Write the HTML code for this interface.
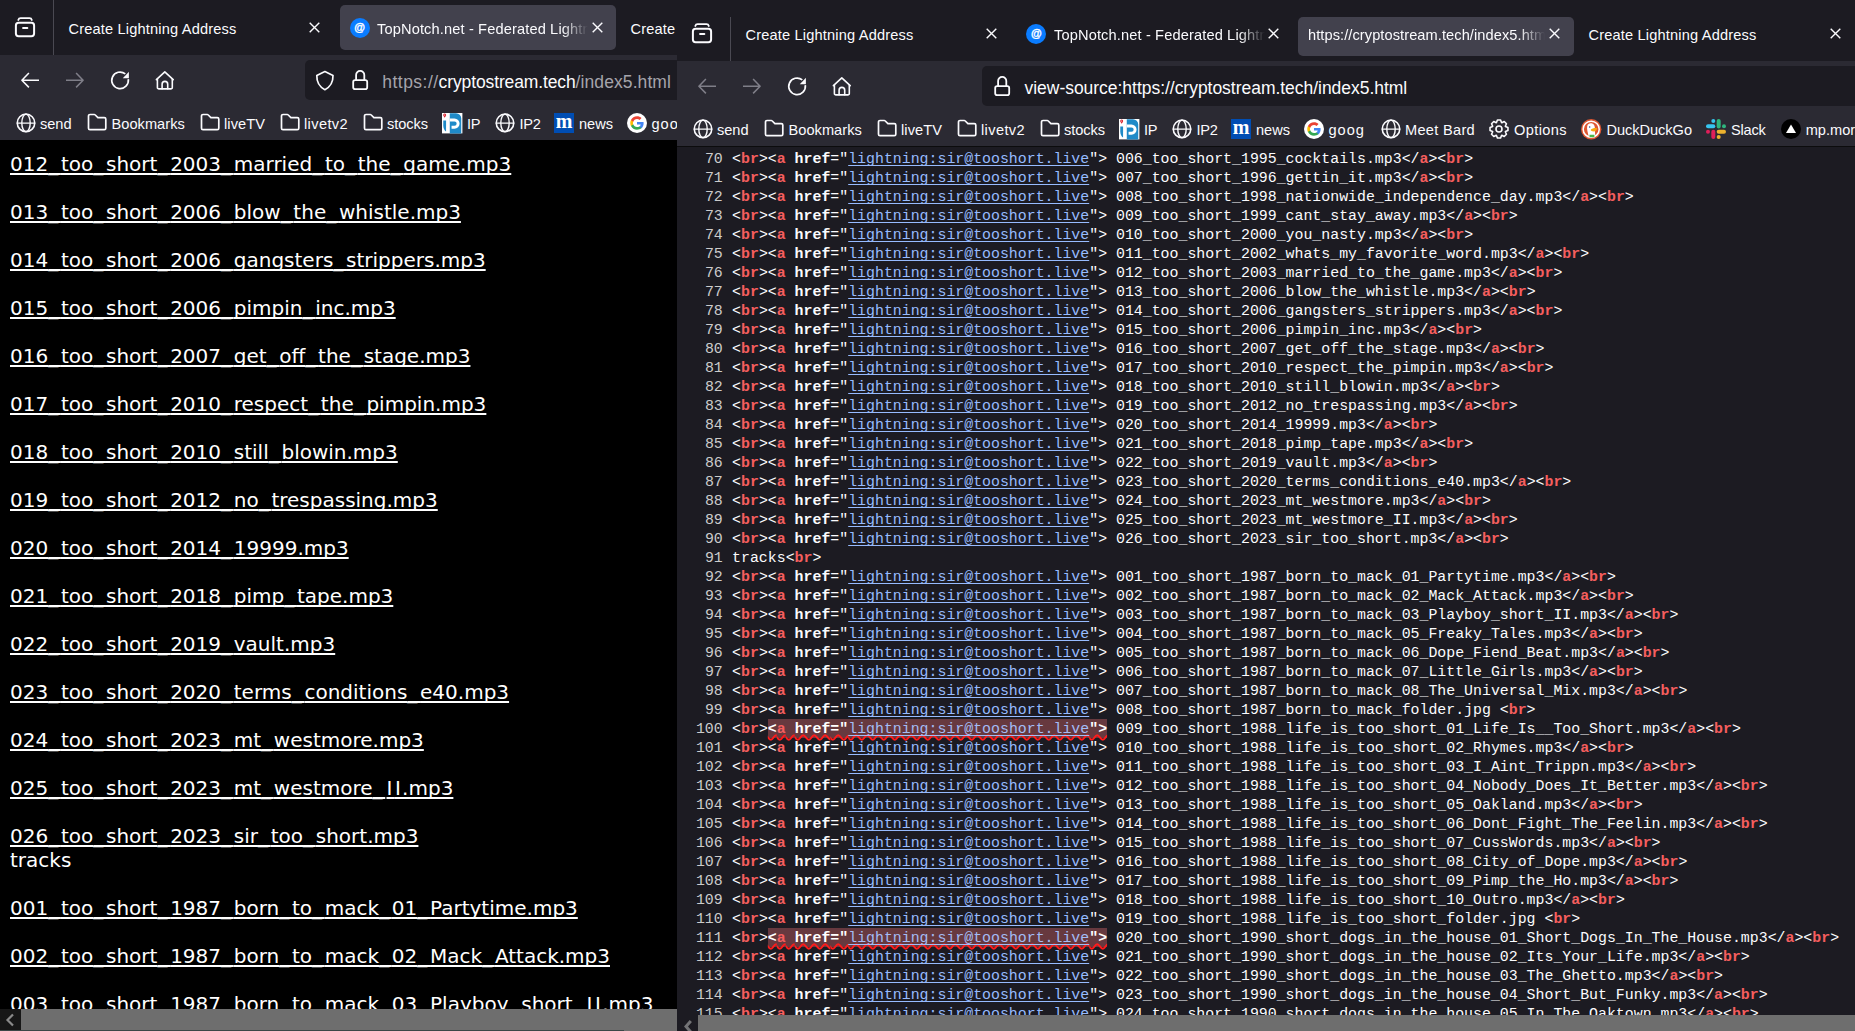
<!DOCTYPE html>
<html lang="en"><head><meta charset="utf-8"><title>cryptostream</title>
<style>
html,body{margin:0;padding:0}
body{width:1855px;height:1031px;overflow:hidden;background:#1c1b22;position:relative;font-family:"Liberation Sans",sans-serif}
.w{position:absolute;top:0;height:1031px;overflow:hidden}
.abs{position:absolute}
.t{position:absolute;white-space:pre;line-height:20px;height:20px;font-family:"Liberation Sans",sans-serif}
.fade{overflow:hidden;-webkit-mask-image:linear-gradient(to right,#000 calc(100% - 26px),transparent 100%);mask-image:linear-gradient(to right,#000 calc(100% - 26px),transparent 100%)}
#page{position:absolute;left:0;top:140px;width:677px;height:869px;background:#000;overflow:hidden}
#pg{position:absolute;left:10px;top:-12.5px;font:20px/24px "DejaVu Sans","Liberation Sans",sans-serif;color:#fff;white-space:nowrap}
#pg a{color:#fff;text-decoration:underline;text-decoration-thickness:1.5px;text-underline-offset:1.6px;text-decoration-skip-ink:none}
#pg i{font-style:normal;letter-spacing:2.72px}
#pg em{font-style:normal;letter-spacing:2.5px;margin-left:1.2px;margin-right:-1.2px}
#src{position:absolute;left:0;top:146px;width:1178px;height:869px;background:#1c1b22;overflow:hidden;border-top:1px solid #0c0c0d;box-sizing:border-box}
#vs{position:absolute;left:10px;top:3.0px;font:14.89px/19px "Liberation Mono",monospace;color:#fbfbfe}
#vs div{height:19px;padding-left:45.1px;white-space:pre}
#vs b.n{display:inline-block;width:44.67px;margin-left:-45.1px;margin-right:.43px;text-align:right;color:#ccc;font-weight:normal}
#vs b{color:#f55e5e}
#vs u{color:#97bbff;text-decoration-thickness:1px;text-underline-offset:2px;text-decoration-skip-ink:none}
#vs em{font-style:normal;font-weight:bold}
#vs s{text-decoration:underline wavy #ff1a1a 1.5px;text-underline-offset:1.2px;box-shadow:0 -1px 0 #67393f;background:#67393f;font-weight:bold;color:#fff;display:inline-block;height:18px;text-decoration-skip-ink:none}
#vs s u{color:#a4bcf5;font-weight:normal}
</style></head><body>
<div class="w" style="left:0;width:677px"><div class="abs" style="left:0;top:0;width:677px;height:55px;background:#1c1b22"></div><div class="abs" style="left:0;top:55px;width:677px;height:85px;background:#2b2a33"></div><svg style="position:absolute;left:13px;top:15px;overflow:visible" width="24" height="24" viewBox="0 0 24 24" ><g fill="none" stroke="#fbfbfe" stroke-width="2" stroke-linecap="round" stroke-linejoin="round"><rect x="2.900" y="7.800" width="18.200" height="13.500" rx="2.700"/><path d="M5.300 5Q5.800 3.200 7.600 3.200H16.500Q18.300 3.200 18.800 5" stroke-width="1.800"/><path d="M10.100 13.050h4.200" stroke-width="2.100"/></g></svg><div class="abs" style="left:53px;top:0;width:1px;height:55px;background:#4a4952"></div><span class="t " style="left:68.5px;top:18.5px;font-size:14.6px;color:#fbfbfe;letter-spacing:0.171px;">Create Lightning Address</span><svg style="position:absolute;left:306.5px;top:20.0px;overflow:visible" width="15" height="15" viewBox="0 0 15 15" ><path fill="none" stroke="#fbfbfe" stroke-width="1.4" stroke-linecap="butt" stroke-linejoin="round" d="M2.700 2.700l9.600 9.600M12.300 2.700l-9.600 9.600"/></svg><div class="abs" style="left:340px;top:5px;width:276px;height:45px;background:#42414d;border-radius:5px"></div><div style="position:absolute;left:349.7px;top:18px;width:20px;height:20px;border-radius:50%;background:#0a7cff;color:#fff;font:bold 11px/18px 'Liberation Sans',sans-serif;text-align:center;-webkit-text-stroke:.35px #fff">@</div><span class="t fade" style="left:377px;top:18.5px;font-size:14.6px;color:#fbfbfe;width:211px;letter-spacing:0.143px;">TopNotch.net - Federated Lightning Address</span><svg style="position:absolute;left:589.5px;top:20.0px;overflow:visible" width="15" height="15" viewBox="0 0 15 15" ><path fill="none" stroke="#fbfbfe" stroke-width="1.4" stroke-linecap="butt" stroke-linejoin="round" d="M2.700 2.700l9.600 9.600M12.300 2.700l-9.600 9.600"/></svg><span class="t " style="left:630.5px;top:18.5px;font-size:14.6px;color:#fbfbfe;letter-spacing:0.171px;">Create Lightning Address</span><svg style="position:absolute;left:20px;top:70.2px;overflow:visible" width="20" height="20" viewBox="0 0 20 20" ><path fill="none" stroke="#fbfbfe" stroke-width="1.55" stroke-linecap="butt" stroke-linejoin="round" d="M19 10.2H2.200M8.900 3 1.900 10.200l7 7.200"/></svg><svg style="position:absolute;left:65px;top:70.2px;overflow:visible" width="20" height="20" viewBox="0 0 20 20" ><path fill="none" stroke="#7f7e88" stroke-width="1.55" stroke-linecap="butt" stroke-linejoin="round" d="M1 10.200h16.800M11.100 3l7 7.200-7 7.200"/></svg><svg style="position:absolute;left:110px;top:70px;overflow:visible" width="20" height="20" viewBox="0 0 20 20" ><path fill="none" stroke="#fbfbfe" stroke-width="1.7" stroke-linecap="butt" stroke-linejoin="round" d="M15.300 3.900A8.300 8.300 0 1 0 18.300 9.200"/><path fill="#fbfbfe" d="M18.900 1.700v6.500h-6.100z"/></svg><svg style="position:absolute;left:154.5px;top:69.8px;overflow:visible" width="20" height="20" viewBox="0 0 20 20" ><g fill="none" stroke="#fbfbfe" stroke-width="1.6" stroke-linecap="round" stroke-linejoin="round"><path d="M1.400 9.600 9.800 1.800l8.400 7.800"/><path d="M2.400 9.200v8.200a1.500 1.500 0 0 0 1.500 1.500h11.900a1.500 1.500 0 0 0 1.500-1.500V9.200"/><path d="M7.100 18.800V14.200a2.800 2.800 0 0 1 5.600 0v4.600"/></g></svg><div class="abs" style="left:305px;top:60px;width:400px;height:40px;background:#1c1b22;border-radius:5px"></div><svg style="position:absolute;left:315px;top:70.5px;overflow:visible" width="20" height="20" viewBox="0 0 20 20" ><path fill="none" stroke="#fbfbfe" stroke-width="1.7" stroke-linecap="round" stroke-linejoin="round" d="M9.900 0.500 18 4.400C18.200 11 15.500 15.800 9.900 18.700 4.300 15.800 1.600 11 1.800 4.400z"/></svg><svg style="position:absolute;left:350px;top:70px;overflow:visible" width="20" height="20" viewBox="0 0 20 20" ><g fill="none" stroke="#fbfbfe" stroke-width="1.8" stroke-linecap="round" stroke-linejoin="round"><rect x="3.200" y="10.100" width="14" height="9.100" rx="1.900"/><path d="M6.100 10.100V5a4.100 4.100 0 0 1 8.200 0v5.100"/></g></svg><span class="t" style="left:382.3px;top:72px;font-size:17.5px;color:#a5a4ab"><span style="letter-spacing:0.471px">https://</span><span style="color:#fbfbfe;letter-spacing:-0.122px">cryptostream.tech</span><span style="letter-spacing:0.087px">/index5.html</span></span><svg style="position:absolute;left:15.5px;top:113.25px;overflow:visible" width="20" height="20" viewBox="0 0 20 20" ><g fill="none" stroke="#fbfbfe" stroke-width="1.6" stroke-linecap="round" stroke-linejoin="round"><circle cx="10" cy="9.900" r="8.750"/><path d="M1.300 10.200h17.400" stroke-width="1.300"/><ellipse cx="10" cy="9.900" rx="4.200" ry="8.750" stroke-width="1.400"/></g></svg><span class="t " style="left:39.9px;top:113.5px;font-size:14.6px;color:#fbfbfe;letter-spacing:0.011px;">send</span><svg style="position:absolute;left:86.5px;top:113.25px;overflow:visible" width="20" height="20" viewBox="0 0 20 20" ><path fill="none" stroke="#fbfbfe" stroke-width="1.7" stroke-linecap="round" stroke-linejoin="round" d="M1.500 3a1.500 1.500 0 0 1 1.500-1.500h4.200a1.500 1.500 0 0 1 1.100.500l2.600 2.600h6.400a1.500 1.500 0 0 1 1.500 1.500v9.100a1.500 1.500 0 0 1-1.500 1.500H3a1.500 1.500 0 0 1-1.500-1.500z"/></svg><span class="t " style="left:111.5px;top:113.5px;font-size:14.6px;color:#fbfbfe;letter-spacing:0.033px;">Bookmarks</span><svg style="position:absolute;left:199.5px;top:113.25px;overflow:visible" width="20" height="20" viewBox="0 0 20 20" ><path fill="none" stroke="#fbfbfe" stroke-width="1.7" stroke-linecap="round" stroke-linejoin="round" d="M1.500 3a1.500 1.500 0 0 1 1.500-1.500h4.200a1.500 1.500 0 0 1 1.100.500l2.600 2.600h6.400a1.500 1.500 0 0 1 1.500 1.500v9.100a1.500 1.500 0 0 1-1.500 1.500H3a1.500 1.500 0 0 1-1.500-1.500z"/></svg><span class="t " style="left:224.0px;top:113.5px;font-size:14.6px;color:#fbfbfe;letter-spacing:0.076px;">liveTV</span><svg style="position:absolute;left:279.5px;top:113.25px;overflow:visible" width="20" height="20" viewBox="0 0 20 20" ><path fill="none" stroke="#fbfbfe" stroke-width="1.7" stroke-linecap="round" stroke-linejoin="round" d="M1.500 3a1.500 1.500 0 0 1 1.500-1.500h4.200a1.500 1.500 0 0 1 1.100.500l2.600 2.600h6.400a1.500 1.500 0 0 1 1.500 1.500v9.100a1.500 1.500 0 0 1-1.500 1.500H3a1.500 1.500 0 0 1-1.500-1.500z"/></svg><span class="t " style="left:304.0px;top:113.5px;font-size:14.6px;color:#fbfbfe;letter-spacing:0.375px;">livetv2</span><svg style="position:absolute;left:362.5px;top:113.25px;overflow:visible" width="20" height="20" viewBox="0 0 20 20" ><path fill="none" stroke="#fbfbfe" stroke-width="1.7" stroke-linecap="round" stroke-linejoin="round" d="M1.500 3a1.500 1.500 0 0 1 1.500-1.500h4.200a1.500 1.500 0 0 1 1.100.500l2.600 2.600h6.400a1.500 1.500 0 0 1 1.500 1.500v9.100a1.500 1.500 0 0 1-1.500 1.500H3a1.500 1.500 0 0 1-1.500-1.500z"/></svg><span class="t " style="left:387.0px;top:113.5px;font-size:14.6px;color:#fbfbfe;letter-spacing:-0.06px;">stocks</span><svg style="position:absolute;left:441.8px;top:112.55px;overflow:visible" width="20.4" height="20.4" viewBox="0 0 16 16" ><rect width="16" height="16" fill="#fff"/><path fill="#1f8ac8" d="M6.100 0.200H11a4.100 4.100 0 0 1 4.100 4.100V16H6.100z"/><path fill="#1f8ac8" d="M1 5.800H3.200V14.600C2 13.800 1 12 1 10z"/><path fill="none" stroke="#fff" stroke-width="2.300" d="M6.100 5.450H9.800a2.850 2.850 0 0 1 0 5.700H7.500"/><path fill="#d9202c" d="M2.100 3.800 1.100 2.100a1.150 1.150 0 1 1 2 0z"/><circle cx="2.100" cy="1.600" r=".4" fill="#fff"/></svg><span class="t " style="left:467.0px;top:113.5px;font-size:14.6px;color:#fbfbfe;letter-spacing:-0.398px;">IP</span><svg style="position:absolute;left:494.5px;top:113.25px;overflow:visible" width="20" height="20" viewBox="0 0 20 20" ><g fill="none" stroke="#fbfbfe" stroke-width="1.6" stroke-linecap="round" stroke-linejoin="round"><circle cx="10" cy="9.900" r="8.750"/><path d="M1.300 10.200h17.400" stroke-width="1.300"/><ellipse cx="10" cy="9.900" rx="4.200" ry="8.750" stroke-width="1.400"/></g></svg><span class="t " style="left:519.5px;top:113.5px;font-size:14.6px;color:#fbfbfe;letter-spacing:-0.302px;">IP2</span><div style="position:absolute;left:554px;top:112.7px;width:20px;height:20px;background:#004db3;color:#fff;font:bold 20px/16px 'Liberation Serif',serif;text-align:center;overflow:hidden">m</div><span class="t " style="left:579.0px;top:113.5px;font-size:14.6px;color:#fbfbfe;letter-spacing:-0.02px;">news</span><svg style="position:absolute;left:627px;top:112.7px;overflow:visible" width="20" height="20" viewBox="0 0 16 16" ><circle cx="8" cy="8" r="8" fill="#fff"/><g transform="translate(2.6 2.6) scale(0.225)"><path fill="#4285F4" d="M47.5 24.6c0-1.6-.1-3.1-.4-4.6H24v9.100h13.200c-.6 3-2.300 5.500-4.800 7.200v6h7.800c4.600-4.200 7.300-10.400 7.300-17.700z"/><path fill="#34A853" d="M24 48c6.500 0 12-2.100 16-5.800l-7.800-6c-2.200 1.500-5 2.300-8.200 2.300-6.300 0-11.600-4.200-13.500-9.900H2.500v6.200C6.500 42.600 14.600 48 24 48z"/><path fill="#FBBC05" d="M10.500 28.600c-.5-1.500-.8-3-.8-4.600s.3-3.100.8-4.600v-6.200H2.500C.9 16.500 0 20.100 0 24s.9 7.500 2.500 10.800l8-6.200z"/><path fill="#EA4335" d="M24 9.500c3.500 0 6.700 1.200 9.200 3.600l6.900-6.900C35.900 2.400 30.500 0 24 0 14.600 0 6.500 5.400 2.500 13.200l8 6.200c1.900-5.700 7.200-9.900 13.500-9.900z"/></g></svg><span class="t " style="left:651.5px;top:113.5px;font-size:14.6px;color:#fbfbfe;letter-spacing:1.008px;">goog</span><div id="page"><div id="pg"><br><a>012<i>_</i>too<i>_</i>short<i>_</i>2003<i>_</i>married<i>_</i>to<i>_</i>the<i>_</i>game.mp3</a><br>
<br><a>013<i>_</i>too<i>_</i>short<i>_</i>2006<i>_</i>blow<i>_</i>the<i>_</i>whistle.mp3</a><br>
<br><a>014<i>_</i>too<i>_</i>short<i>_</i>2006<i>_</i>gangsters<i>_</i>strippers.mp3</a><br>
<br><a>015<i>_</i>too<i>_</i>short<i>_</i>2006<i>_</i>pimpin<i>_</i>inc.mp3</a><br>
<br><a>016<i>_</i>too<i>_</i>short<i>_</i>2007<i>_</i>get<i>_</i>off<i>_</i>the<i>_</i>stage.mp3</a><br>
<br><a>017<i>_</i>too<i>_</i>short<i>_</i>2010<i>_</i>respect<i>_</i>the<i>_</i>pimpin.mp3</a><br>
<br><a>018<i>_</i>too<i>_</i>short<i>_</i>2010<i>_</i>still<i>_</i>blowin.mp3</a><br>
<br><a>019<i>_</i>too<i>_</i>short<i>_</i>2012<i>_</i>no<i>_</i>trespassing.mp3</a><br>
<br><a>020<i>_</i>too<i>_</i>short<i>_</i>2014<i>_</i>19999.mp3</a><br>
<br><a>021<i>_</i>too<i>_</i>short<i>_</i>2018<i>_</i>pimp<i>_</i>tape.mp3</a><br>
<br><a>022<i>_</i>too<i>_</i>short<i>_</i>2019<i>_</i>vault.mp3</a><br>
<br><a>023<i>_</i>too<i>_</i>short<i>_</i>2020<i>_</i>terms<i>_</i>conditions<i>_</i>e40.mp3</a><br>
<br><a>024<i>_</i>too<i>_</i>short<i>_</i>2023<i>_</i>mt<i>_</i>westmore.mp3</a><br>
<br><a>025<i>_</i>too<i>_</i>short<i>_</i>2023<i>_</i>mt<i>_</i>westmore<i>_</i><em>I</em><em>I</em>.mp3</a><br>
<br><a>026<i>_</i>too<i>_</i>short<i>_</i>2023<i>_</i>sir<i>_</i>too<i>_</i>short.mp3</a><br>
tracks<br>
<br><a>001<i>_</i>too<i>_</i>short<i>_</i>1987<i>_</i>born<i>_</i>to<i>_</i>mack<i>_</i>01<i>_</i>Partytime.mp3</a><br>
<br><a>002<i>_</i>too<i>_</i>short<i>_</i>1987<i>_</i>born<i>_</i>to<i>_</i>mack<i>_</i>02<i>_</i>Mack<i>_</i>Attack.mp3</a><br>
<br><a>003<i>_</i>too<i>_</i>short<i>_</i>1987<i>_</i>born<i>_</i>to<i>_</i>mack<i>_</i>03<i>_</i>Playboy<i>_</i>short<i>_</i><em>I</em><em>I</em>.mp3</a><br>
</div></div><div class="abs" style="left:0;top:1009px;width:677px;height:22px;background:#6e6e6e"></div><div class="abs" style="left:0;top:1009px;width:21px;height:22px;background:#171717"></div><div class="abs" style="left:0;top:1030px;width:624px;height:1px;background:#3b4747"></div><svg class="abs" style="left:5px;top:1012.5px" width="10" height="14" viewBox="0 0 10 14"><path d="M8 1.500 2.500 7 8 12.500" fill="none" stroke="#8a8a8a" stroke-width="2.2"/></svg></div><div class="w" style="left:677px;width:1178px"><div class="abs" style="left:0;top:0;width:1178px;height:61px;background:#1c1b22"></div><div class="abs" style="left:0;top:61px;width:1178px;height:85px;background:#2b2a33"></div><svg style="position:absolute;left:13px;top:21px;overflow:visible" width="24" height="24" viewBox="0 0 24 24" ><g fill="none" stroke="#fbfbfe" stroke-width="2" stroke-linecap="round" stroke-linejoin="round"><rect x="2.900" y="7.800" width="18.200" height="13.500" rx="2.700"/><path d="M5.300 5Q5.800 3.200 7.600 3.200H16.500Q18.300 3.200 18.800 5" stroke-width="1.800"/><path d="M10.100 13.050h4.200" stroke-width="2.100"/></g></svg><div class="abs" style="left:53px;top:17px;width:1px;height:44px;background:#4a4952"></div><span class="t " style="left:68.5px;top:24.5px;font-size:14.6px;color:#fbfbfe;letter-spacing:0.171px;">Create Lightning Address</span><svg style="position:absolute;left:306.5px;top:26.0px;overflow:visible" width="15" height="15" viewBox="0 0 15 15" ><path fill="none" stroke="#fbfbfe" stroke-width="1.4" stroke-linecap="butt" stroke-linejoin="round" d="M2.700 2.700l9.600 9.600M12.300 2.700l-9.600 9.600"/></svg><div style="position:absolute;left:349.3px;top:24px;width:20px;height:20px;border-radius:50%;background:#0a7cff;color:#fff;font:bold 11px/18px 'Liberation Sans',sans-serif;text-align:center;-webkit-text-stroke:.35px #fff">@</div><span class="t fade" style="left:377px;top:24.5px;font-size:14.6px;color:#fbfbfe;width:211px;letter-spacing:0.143px;">TopNotch.net - Federated Lightning Address</span><svg style="position:absolute;left:589.0px;top:26.0px;overflow:visible" width="15" height="15" viewBox="0 0 15 15" ><path fill="none" stroke="#fbfbfe" stroke-width="1.4" stroke-linecap="butt" stroke-linejoin="round" d="M2.700 2.700l9.600 9.600M12.300 2.700l-9.600 9.600"/></svg><div class="abs" style="left:621px;top:17px;width:276px;height:39px;background:#42414d;border-radius:5px"></div><span class="t fade" style="left:631px;top:24.5px;font-size:14.6px;color:#fbfbfe;width:237px;letter-spacing:0.083px;">https://cryptostream.tech/index5.html</span><svg style="position:absolute;left:870.0px;top:26.0px;overflow:visible" width="15" height="15" viewBox="0 0 15 15" ><path fill="none" stroke="#fbfbfe" stroke-width="1.4" stroke-linecap="butt" stroke-linejoin="round" d="M2.700 2.700l9.600 9.600M12.300 2.700l-9.600 9.600"/></svg><span class="t " style="left:911.5px;top:24.5px;font-size:14.6px;color:#fbfbfe;letter-spacing:0.171px;">Create Lightning Address</span><svg style="position:absolute;left:1150.5px;top:26.0px;overflow:visible" width="15" height="15" viewBox="0 0 15 15" ><path fill="none" stroke="#fbfbfe" stroke-width="1.4" stroke-linecap="butt" stroke-linejoin="round" d="M2.700 2.700l9.600 9.600M12.300 2.700l-9.600 9.600"/></svg><svg style="position:absolute;left:20px;top:76.2px;overflow:visible" width="20" height="20" viewBox="0 0 20 20" ><path fill="none" stroke="#7f7e88" stroke-width="1.55" stroke-linecap="butt" stroke-linejoin="round" d="M19 10.2H2.200M8.900 3 1.900 10.200l7 7.200"/></svg><svg style="position:absolute;left:65px;top:76.2px;overflow:visible" width="20" height="20" viewBox="0 0 20 20" ><path fill="none" stroke="#7f7e88" stroke-width="1.55" stroke-linecap="butt" stroke-linejoin="round" d="M1 10.200h16.800M11.100 3l7 7.200-7 7.200"/></svg><svg style="position:absolute;left:110px;top:76px;overflow:visible" width="20" height="20" viewBox="0 0 20 20" ><path fill="none" stroke="#fbfbfe" stroke-width="1.7" stroke-linecap="butt" stroke-linejoin="round" d="M15.300 3.900A8.300 8.300 0 1 0 18.300 9.200"/><path fill="#fbfbfe" d="M18.900 1.700v6.500h-6.100z"/></svg><svg style="position:absolute;left:154.5px;top:75.8px;overflow:visible" width="20" height="20" viewBox="0 0 20 20" ><g fill="none" stroke="#fbfbfe" stroke-width="1.6" stroke-linecap="round" stroke-linejoin="round"><path d="M1.400 9.600 9.800 1.800l8.400 7.800"/><path d="M2.400 9.200v8.200a1.500 1.500 0 0 0 1.500 1.500h11.900a1.500 1.500 0 0 0 1.500-1.500V9.200"/><path d="M7.100 18.800V14.200a2.800 2.800 0 0 1 5.600 0v4.600"/></g></svg><div class="abs" style="left:305px;top:66px;width:900px;height:40px;background:#1c1b22;border-radius:5px"></div><svg style="position:absolute;left:315px;top:76px;overflow:visible" width="20" height="20" viewBox="0 0 20 20" ><g fill="none" stroke="#fbfbfe" stroke-width="1.8" stroke-linecap="round" stroke-linejoin="round"><rect x="3.200" y="10.100" width="14" height="9.100" rx="1.900"/><path d="M6.100 10.100V5a4.100 4.100 0 0 1 8.200 0v5.100"/></g></svg><span class="t" style="left:347.5px;top:78px;font-size:17.5px;letter-spacing:-0.03px;color:#fbfbfe">view-source:https://cryptostream.tech/index5.html</span><svg style="position:absolute;left:15.5px;top:119.25px;overflow:visible" width="20" height="20" viewBox="0 0 20 20" ><g fill="none" stroke="#fbfbfe" stroke-width="1.6" stroke-linecap="round" stroke-linejoin="round"><circle cx="10" cy="9.900" r="8.750"/><path d="M1.300 10.200h17.400" stroke-width="1.300"/><ellipse cx="10" cy="9.900" rx="4.200" ry="8.750" stroke-width="1.400"/></g></svg><span class="t " style="left:39.9px;top:119.5px;font-size:14.6px;color:#fbfbfe;letter-spacing:0.011px;">send</span><svg style="position:absolute;left:86.5px;top:119.25px;overflow:visible" width="20" height="20" viewBox="0 0 20 20" ><path fill="none" stroke="#fbfbfe" stroke-width="1.7" stroke-linecap="round" stroke-linejoin="round" d="M1.500 3a1.500 1.500 0 0 1 1.500-1.500h4.200a1.500 1.500 0 0 1 1.100.500l2.600 2.600h6.400a1.500 1.500 0 0 1 1.500 1.500v9.100a1.500 1.500 0 0 1-1.500 1.500H3a1.500 1.500 0 0 1-1.500-1.500z"/></svg><span class="t " style="left:111.5px;top:119.5px;font-size:14.6px;color:#fbfbfe;letter-spacing:0.033px;">Bookmarks</span><svg style="position:absolute;left:199.5px;top:119.25px;overflow:visible" width="20" height="20" viewBox="0 0 20 20" ><path fill="none" stroke="#fbfbfe" stroke-width="1.7" stroke-linecap="round" stroke-linejoin="round" d="M1.500 3a1.500 1.500 0 0 1 1.500-1.500h4.200a1.500 1.500 0 0 1 1.100.500l2.600 2.600h6.400a1.500 1.500 0 0 1 1.500 1.500v9.100a1.500 1.500 0 0 1-1.500 1.500H3a1.500 1.500 0 0 1-1.500-1.500z"/></svg><span class="t " style="left:224.0px;top:119.5px;font-size:14.6px;color:#fbfbfe;letter-spacing:0.076px;">liveTV</span><svg style="position:absolute;left:279.5px;top:119.25px;overflow:visible" width="20" height="20" viewBox="0 0 20 20" ><path fill="none" stroke="#fbfbfe" stroke-width="1.7" stroke-linecap="round" stroke-linejoin="round" d="M1.500 3a1.500 1.500 0 0 1 1.500-1.500h4.200a1.500 1.500 0 0 1 1.100.500l2.600 2.600h6.400a1.500 1.500 0 0 1 1.500 1.500v9.100a1.500 1.500 0 0 1-1.500 1.500H3a1.500 1.500 0 0 1-1.500-1.500z"/></svg><span class="t " style="left:304.0px;top:119.5px;font-size:14.6px;color:#fbfbfe;letter-spacing:0.375px;">livetv2</span><svg style="position:absolute;left:362.5px;top:119.25px;overflow:visible" width="20" height="20" viewBox="0 0 20 20" ><path fill="none" stroke="#fbfbfe" stroke-width="1.7" stroke-linecap="round" stroke-linejoin="round" d="M1.500 3a1.500 1.500 0 0 1 1.500-1.500h4.200a1.500 1.500 0 0 1 1.100.500l2.600 2.600h6.400a1.500 1.500 0 0 1 1.500 1.500v9.100a1.500 1.500 0 0 1-1.500 1.500H3a1.500 1.500 0 0 1-1.500-1.500z"/></svg><span class="t " style="left:387.0px;top:119.5px;font-size:14.6px;color:#fbfbfe;letter-spacing:-0.06px;">stocks</span><svg style="position:absolute;left:441.8px;top:118.55px;overflow:visible" width="20.4" height="20.4" viewBox="0 0 16 16" ><rect width="16" height="16" fill="#fff"/><path fill="#1f8ac8" d="M6.100 0.200H11a4.100 4.100 0 0 1 4.100 4.100V16H6.100z"/><path fill="#1f8ac8" d="M1 5.800H3.200V14.600C2 13.800 1 12 1 10z"/><path fill="none" stroke="#fff" stroke-width="2.300" d="M6.100 5.450H9.800a2.850 2.850 0 0 1 0 5.700H7.500"/><path fill="#d9202c" d="M2.100 3.800 1.100 2.100a1.150 1.150 0 1 1 2 0z"/><circle cx="2.100" cy="1.600" r=".4" fill="#fff"/></svg><span class="t " style="left:467.0px;top:119.5px;font-size:14.6px;color:#fbfbfe;letter-spacing:-0.398px;">IP</span><svg style="position:absolute;left:494.5px;top:119.25px;overflow:visible" width="20" height="20" viewBox="0 0 20 20" ><g fill="none" stroke="#fbfbfe" stroke-width="1.6" stroke-linecap="round" stroke-linejoin="round"><circle cx="10" cy="9.900" r="8.750"/><path d="M1.300 10.200h17.400" stroke-width="1.300"/><ellipse cx="10" cy="9.900" rx="4.200" ry="8.750" stroke-width="1.400"/></g></svg><span class="t " style="left:519.5px;top:119.5px;font-size:14.6px;color:#fbfbfe;letter-spacing:-0.302px;">IP2</span><div style="position:absolute;left:554px;top:118.7px;width:20px;height:20px;background:#004db3;color:#fff;font:bold 20px/16px 'Liberation Serif',serif;text-align:center;overflow:hidden">m</div><span class="t " style="left:579.0px;top:119.5px;font-size:14.6px;color:#fbfbfe;letter-spacing:-0.02px;">news</span><svg style="position:absolute;left:627px;top:118.7px;overflow:visible" width="20" height="20" viewBox="0 0 16 16" ><circle cx="8" cy="8" r="8" fill="#fff"/><g transform="translate(2.6 2.6) scale(0.225)"><path fill="#4285F4" d="M47.5 24.6c0-1.6-.1-3.1-.4-4.6H24v9.100h13.200c-.6 3-2.300 5.500-4.800 7.200v6h7.800c4.600-4.200 7.300-10.400 7.300-17.700z"/><path fill="#34A853" d="M24 48c6.500 0 12-2.100 16-5.800l-7.800-6c-2.200 1.500-5 2.300-8.200 2.300-6.300 0-11.600-4.200-13.500-9.900H2.500v6.200C6.500 42.600 14.600 48 24 48z"/><path fill="#FBBC05" d="M10.500 28.600c-.5-1.500-.8-3-.8-4.600s.3-3.100.8-4.600v-6.200H2.500C.9 16.500 0 20.100 0 24s.9 7.500 2.500 10.800l8-6.200z"/><path fill="#EA4335" d="M24 9.500c3.500 0 6.700 1.200 9.200 3.600l6.900-6.900C35.900 2.400 30.500 0 24 0 14.600 0 6.500 5.400 2.500 13.200l8 6.200c1.900-5.700 7.200-9.900 13.500-9.900z"/></g></svg><span class="t " style="left:651.5px;top:119.5px;font-size:14.6px;color:#fbfbfe;letter-spacing:1.008px;">goog</span><svg style="position:absolute;left:704px;top:119.25px;overflow:visible" width="20" height="20" viewBox="0 0 20 20" ><g fill="none" stroke="#fbfbfe" stroke-width="1.6" stroke-linecap="round" stroke-linejoin="round"><circle cx="10" cy="9.900" r="8.750"/><path d="M1.300 10.200h17.400" stroke-width="1.300"/><ellipse cx="10" cy="9.900" rx="4.200" ry="8.750" stroke-width="1.400"/></g></svg><span class="t " style="left:728.0px;top:119.5px;font-size:14.6px;color:#fbfbfe;letter-spacing:0.297px;">Meet Bard</span><svg style="position:absolute;left:812px;top:119.25px;overflow:visible" width="20" height="20" viewBox="0 0 20 20" ><g fill="none" stroke="#fbfbfe" stroke-width="1.6" stroke-linecap="round" stroke-linejoin="round"><path d="M8.42 1.04 L11.58 1.04 L12.53 3.58 L12.75 3.67 L15.22 2.55 L17.45 4.78 L16.33 7.25 L16.42 7.47 L18.96 8.42 L18.96 11.58 L16.42 12.53 L16.33 12.75 L17.45 15.22 L15.22 17.45 L12.75 16.33 L12.53 16.42 L11.58 18.96 L8.42 18.96 L7.47 16.42 L7.25 16.33 L4.78 17.45 L2.55 15.22 L3.67 12.75 L3.58 12.53 L1.04 11.58 L1.04 8.42 L3.58 7.47 L3.67 7.25 L2.55 4.78 L4.78 2.55 L7.25 3.67 L7.47 3.58Z"/><circle cx="10" cy="10" r="3"/></g></svg><span class="t " style="left:837.0px;top:119.5px;font-size:14.6px;color:#fbfbfe;letter-spacing:0.386px;">Options</span><svg style="position:absolute;left:903.5px;top:118.7px;overflow:visible" width="20.4" height="20.4" viewBox="0 0 16 16" ><circle cx="8" cy="8" r="8" fill="#de5833"/><circle cx="8" cy="8" r="6.300" fill="none" stroke="#fff" stroke-width="1.200"/><path fill="#fff" d="M6 13.600C5.500 11 4.300 7.600 4.900 5.400 5.400 3.600 7.300 2.900 8.900 3.600c1.500.700 2 2.200 2 3.900l.2 5.900c-1.600.800-3.400.900-5.100.200z"/><path fill="#f9a80e" d="M8 8.100c1.600-.900 3.900-1.200 4.600-.700.600.500-.400 1.100-1.500 1.300.900.100 1.300.500.800.800-.800.400-3 .500-3.900-.200-.400-.300-.400-.900 0-1.200z"/><path fill="#4cb848" d="M6.600 12.400h3.900c.200.600.100 1.300-.100 1.700-1.300.400-2.600.400-3.700 0z"/><circle cx="6.800" cy="6.300" r=".6" fill="#2d4f8e"/></svg><span class="t " style="left:929.5px;top:119.5px;font-size:14.6px;color:#fbfbfe;letter-spacing:-0.047px;">DuckDuckGo</span><svg style="position:absolute;left:1029px;top:118.7px;overflow:visible" width="20" height="20" viewBox="0 0 16 16" ><rect x="4.25" y="0.03" width="3.19" height="3.19" rx="1.6" fill="#36c5f0"/><rect x="0" y="4.29" width="7.44" height="3.19" rx="1.6" fill="#36c5f0"/><rect x="12.8" y="4.29" width="3.19" height="3.19" rx="1.6" fill="#2eb67d"/><rect x="8.56" y="0.03" width="3.19" height="7.47" rx="1.6" fill="#2eb67d"/><rect x="8.56" y="12.8" width="3.19" height="3.19" rx="1.6" fill="#ecb22e"/><rect x="8.56" y="8.53" width="7.44" height="3.19" rx="1.6" fill="#ecb22e"/><rect x="0" y="8.53" width="3.19" height="3.19" rx="1.6" fill="#e01e5a"/><rect x="4.25" y="8.53" width="3.19" height="7.47" rx="1.6" fill="#e01e5a"/></svg><span class="t " style="left:1054.0px;top:119.5px;font-size:14.6px;color:#fbfbfe;letter-spacing:-0.237px;">Slack</span><svg style="position:absolute;left:1103.8px;top:118.7px;overflow:visible" width="20" height="20" viewBox="0 0 16 16" ><circle cx="8" cy="8" r="8" fill="#000"/><path fill="#fff" d="M8 4.300l4 6.800H4z"/></svg><span class="t " style="left:1128.7px;top:119.5px;font-size:14.6px;color:#fbfbfe;">mp.more</span><div id="src"><div id="vs"><div><b class="n">70 </b>&lt;<b>br</b>&gt;&lt;<b>a</b> <em>href</em>=&quot;<u>lightning:sir@tooshort.live</u>&quot;&gt; 006_too_short_1995_cocktails.mp3&lt;/<b>a</b>&gt;&lt;<b>br</b>&gt;</div>
<div><b class="n">71 </b>&lt;<b>br</b>&gt;&lt;<b>a</b> <em>href</em>=&quot;<u>lightning:sir@tooshort.live</u>&quot;&gt; 007_too_short_1996_gettin_it.mp3&lt;/<b>a</b>&gt;&lt;<b>br</b>&gt;</div>
<div><b class="n">72 </b>&lt;<b>br</b>&gt;&lt;<b>a</b> <em>href</em>=&quot;<u>lightning:sir@tooshort.live</u>&quot;&gt; 008_too_short_1998_nationwide_independence_day.mp3&lt;/<b>a</b>&gt;&lt;<b>br</b>&gt;</div>
<div><b class="n">73 </b>&lt;<b>br</b>&gt;&lt;<b>a</b> <em>href</em>=&quot;<u>lightning:sir@tooshort.live</u>&quot;&gt; 009_too_short_1999_cant_stay_away.mp3&lt;/<b>a</b>&gt;&lt;<b>br</b>&gt;</div>
<div><b class="n">74 </b>&lt;<b>br</b>&gt;&lt;<b>a</b> <em>href</em>=&quot;<u>lightning:sir@tooshort.live</u>&quot;&gt; 010_too_short_2000_you_nasty.mp3&lt;/<b>a</b>&gt;&lt;<b>br</b>&gt;</div>
<div><b class="n">75 </b>&lt;<b>br</b>&gt;&lt;<b>a</b> <em>href</em>=&quot;<u>lightning:sir@tooshort.live</u>&quot;&gt; 011_too_short_2002_whats_my_favorite_word.mp3&lt;/<b>a</b>&gt;&lt;<b>br</b>&gt;</div>
<div><b class="n">76 </b>&lt;<b>br</b>&gt;&lt;<b>a</b> <em>href</em>=&quot;<u>lightning:sir@tooshort.live</u>&quot;&gt; 012_too_short_2003_married_to_the_game.mp3&lt;/<b>a</b>&gt;&lt;<b>br</b>&gt;</div>
<div><b class="n">77 </b>&lt;<b>br</b>&gt;&lt;<b>a</b> <em>href</em>=&quot;<u>lightning:sir@tooshort.live</u>&quot;&gt; 013_too_short_2006_blow_the_whistle.mp3&lt;/<b>a</b>&gt;&lt;<b>br</b>&gt;</div>
<div><b class="n">78 </b>&lt;<b>br</b>&gt;&lt;<b>a</b> <em>href</em>=&quot;<u>lightning:sir@tooshort.live</u>&quot;&gt; 014_too_short_2006_gangsters_strippers.mp3&lt;/<b>a</b>&gt;&lt;<b>br</b>&gt;</div>
<div><b class="n">79 </b>&lt;<b>br</b>&gt;&lt;<b>a</b> <em>href</em>=&quot;<u>lightning:sir@tooshort.live</u>&quot;&gt; 015_too_short_2006_pimpin_inc.mp3&lt;/<b>a</b>&gt;&lt;<b>br</b>&gt;</div>
<div><b class="n">80 </b>&lt;<b>br</b>&gt;&lt;<b>a</b> <em>href</em>=&quot;<u>lightning:sir@tooshort.live</u>&quot;&gt; 016_too_short_2007_get_off_the_stage.mp3&lt;/<b>a</b>&gt;&lt;<b>br</b>&gt;</div>
<div><b class="n">81 </b>&lt;<b>br</b>&gt;&lt;<b>a</b> <em>href</em>=&quot;<u>lightning:sir@tooshort.live</u>&quot;&gt; 017_too_short_2010_respect_the_pimpin.mp3&lt;/<b>a</b>&gt;&lt;<b>br</b>&gt;</div>
<div><b class="n">82 </b>&lt;<b>br</b>&gt;&lt;<b>a</b> <em>href</em>=&quot;<u>lightning:sir@tooshort.live</u>&quot;&gt; 018_too_short_2010_still_blowin.mp3&lt;/<b>a</b>&gt;&lt;<b>br</b>&gt;</div>
<div><b class="n">83 </b>&lt;<b>br</b>&gt;&lt;<b>a</b> <em>href</em>=&quot;<u>lightning:sir@tooshort.live</u>&quot;&gt; 019_too_short_2012_no_trespassing.mp3&lt;/<b>a</b>&gt;&lt;<b>br</b>&gt;</div>
<div><b class="n">84 </b>&lt;<b>br</b>&gt;&lt;<b>a</b> <em>href</em>=&quot;<u>lightning:sir@tooshort.live</u>&quot;&gt; 020_too_short_2014_19999.mp3&lt;/<b>a</b>&gt;&lt;<b>br</b>&gt;</div>
<div><b class="n">85 </b>&lt;<b>br</b>&gt;&lt;<b>a</b> <em>href</em>=&quot;<u>lightning:sir@tooshort.live</u>&quot;&gt; 021_too_short_2018_pimp_tape.mp3&lt;/<b>a</b>&gt;&lt;<b>br</b>&gt;</div>
<div><b class="n">86 </b>&lt;<b>br</b>&gt;&lt;<b>a</b> <em>href</em>=&quot;<u>lightning:sir@tooshort.live</u>&quot;&gt; 022_too_short_2019_vault.mp3&lt;/<b>a</b>&gt;&lt;<b>br</b>&gt;</div>
<div><b class="n">87 </b>&lt;<b>br</b>&gt;&lt;<b>a</b> <em>href</em>=&quot;<u>lightning:sir@tooshort.live</u>&quot;&gt; 023_too_short_2020_terms_conditions_e40.mp3&lt;/<b>a</b>&gt;&lt;<b>br</b>&gt;</div>
<div><b class="n">88 </b>&lt;<b>br</b>&gt;&lt;<b>a</b> <em>href</em>=&quot;<u>lightning:sir@tooshort.live</u>&quot;&gt; 024_too_short_2023_mt_westmore.mp3&lt;/<b>a</b>&gt;&lt;<b>br</b>&gt;</div>
<div><b class="n">89 </b>&lt;<b>br</b>&gt;&lt;<b>a</b> <em>href</em>=&quot;<u>lightning:sir@tooshort.live</u>&quot;&gt; 025_too_short_2023_mt_westmore_II.mp3&lt;/<b>a</b>&gt;&lt;<b>br</b>&gt;</div>
<div><b class="n">90 </b>&lt;<b>br</b>&gt;&lt;<b>a</b> <em>href</em>=&quot;<u>lightning:sir@tooshort.live</u>&quot;&gt; 026_too_short_2023_sir_too_short.mp3&lt;/<b>a</b>&gt;&lt;<b>br</b>&gt;</div>
<div><b class="n">91 </b>tracks&lt;<b>br</b>&gt;</div>
<div><b class="n">92 </b>&lt;<b>br</b>&gt;&lt;<b>a</b> <em>href</em>=&quot;<u>lightning:sir@tooshort.live</u>&quot;&gt; 001_too_short_1987_born_to_mack_01_Partytime.mp3&lt;/<b>a</b>&gt;&lt;<b>br</b>&gt;</div>
<div><b class="n">93 </b>&lt;<b>br</b>&gt;&lt;<b>a</b> <em>href</em>=&quot;<u>lightning:sir@tooshort.live</u>&quot;&gt; 002_too_short_1987_born_to_mack_02_Mack_Attack.mp3&lt;/<b>a</b>&gt;&lt;<b>br</b>&gt;</div>
<div><b class="n">94 </b>&lt;<b>br</b>&gt;&lt;<b>a</b> <em>href</em>=&quot;<u>lightning:sir@tooshort.live</u>&quot;&gt; 003_too_short_1987_born_to_mack_03_Playboy_short_II.mp3&lt;/<b>a</b>&gt;&lt;<b>br</b>&gt;</div>
<div><b class="n">95 </b>&lt;<b>br</b>&gt;&lt;<b>a</b> <em>href</em>=&quot;<u>lightning:sir@tooshort.live</u>&quot;&gt; 004_too_short_1987_born_to_mack_05_Freaky_Tales.mp3&lt;/<b>a</b>&gt;&lt;<b>br</b>&gt;</div>
<div><b class="n">96 </b>&lt;<b>br</b>&gt;&lt;<b>a</b> <em>href</em>=&quot;<u>lightning:sir@tooshort.live</u>&quot;&gt; 005_too_short_1987_born_to_mack_06_Dope_Fiend_Beat.mp3&lt;/<b>a</b>&gt;&lt;<b>br</b>&gt;</div>
<div><b class="n">97 </b>&lt;<b>br</b>&gt;&lt;<b>a</b> <em>href</em>=&quot;<u>lightning:sir@tooshort.live</u>&quot;&gt; 006_too_short_1987_born_to_mack_07_Little_Girls.mp3&lt;/<b>a</b>&gt;&lt;<b>br</b>&gt;</div>
<div><b class="n">98 </b>&lt;<b>br</b>&gt;&lt;<b>a</b> <em>href</em>=&quot;<u>lightning:sir@tooshort.live</u>&quot;&gt; 007_too_short_1987_born_to_mack_08_The_Universal_Mix.mp3&lt;/<b>a</b>&gt;&lt;<b>br</b>&gt;</div>
<div><b class="n">99 </b>&lt;<b>br</b>&gt;&lt;<b>a</b> <em>href</em>=&quot;<u>lightning:sir@tooshort.live</u>&quot;&gt; 008_too_short_1987_born_to_mack_folder.jpg &lt;<b>br</b>&gt;</div>
<div><b class="n">100 </b>&lt;<b>br</b>&gt;<s>&lt;<b>a</b> <em>href</em>=&quot;<u>lightning:sir@tooshort.live</u>&quot;&gt;</s> 009_too_short_1988_life_is_too_short_01_Life_Is__Too_Short.mp3&lt;/<b>a</b>&gt;&lt;<b>br</b>&gt;</div>
<div><b class="n">101 </b>&lt;<b>br</b>&gt;&lt;<b>a</b> <em>href</em>=&quot;<u>lightning:sir@tooshort.live</u>&quot;&gt; 010_too_short_1988_life_is_too_short_02_Rhymes.mp3&lt;/<b>a</b>&gt;&lt;<b>br</b>&gt;</div>
<div><b class="n">102 </b>&lt;<b>br</b>&gt;&lt;<b>a</b> <em>href</em>=&quot;<u>lightning:sir@tooshort.live</u>&quot;&gt; 011_too_short_1988_life_is_too_short_03_I_Aint_Trippn.mp3&lt;/<b>a</b>&gt;&lt;<b>br</b>&gt;</div>
<div><b class="n">103 </b>&lt;<b>br</b>&gt;&lt;<b>a</b> <em>href</em>=&quot;<u>lightning:sir@tooshort.live</u>&quot;&gt; 012_too_short_1988_life_is_too_short_04_Nobody_Does_It_Better.mp3&lt;/<b>a</b>&gt;&lt;<b>br</b>&gt;</div>
<div><b class="n">104 </b>&lt;<b>br</b>&gt;&lt;<b>a</b> <em>href</em>=&quot;<u>lightning:sir@tooshort.live</u>&quot;&gt; 013_too_short_1988_life_is_too_short_05_Oakland.mp3&lt;/<b>a</b>&gt;&lt;<b>br</b>&gt;</div>
<div><b class="n">105 </b>&lt;<b>br</b>&gt;&lt;<b>a</b> <em>href</em>=&quot;<u>lightning:sir@tooshort.live</u>&quot;&gt; 014_too_short_1988_life_is_too_short_06_Dont_Fight_The_Feelin.mp3&lt;/<b>a</b>&gt;&lt;<b>br</b>&gt;</div>
<div><b class="n">106 </b>&lt;<b>br</b>&gt;&lt;<b>a</b> <em>href</em>=&quot;<u>lightning:sir@tooshort.live</u>&quot;&gt; 015_too_short_1988_life_is_too_short_07_CussWords.mp3&lt;/<b>a</b>&gt;&lt;<b>br</b>&gt;</div>
<div><b class="n">107 </b>&lt;<b>br</b>&gt;&lt;<b>a</b> <em>href</em>=&quot;<u>lightning:sir@tooshort.live</u>&quot;&gt; 016_too_short_1988_life_is_too_short_08_City_of_Dope.mp3&lt;/<b>a</b>&gt;&lt;<b>br</b>&gt;</div>
<div><b class="n">108 </b>&lt;<b>br</b>&gt;&lt;<b>a</b> <em>href</em>=&quot;<u>lightning:sir@tooshort.live</u>&quot;&gt; 017_too_short_1988_life_is_too_short_09_Pimp_the_Ho.mp3&lt;/<b>a</b>&gt;&lt;<b>br</b>&gt;</div>
<div><b class="n">109 </b>&lt;<b>br</b>&gt;&lt;<b>a</b> <em>href</em>=&quot;<u>lightning:sir@tooshort.live</u>&quot;&gt; 018_too_short_1988_life_is_too_short_10_Outro.mp3&lt;/<b>a</b>&gt;&lt;<b>br</b>&gt;</div>
<div><b class="n">110 </b>&lt;<b>br</b>&gt;&lt;<b>a</b> <em>href</em>=&quot;<u>lightning:sir@tooshort.live</u>&quot;&gt; 019_too_short_1988_life_is_too_short_folder.jpg &lt;<b>br</b>&gt;</div>
<div><b class="n">111 </b>&lt;<b>br</b>&gt;<s>&lt;<b>a</b> <em>href</em>=&quot;<u>lightning:sir@tooshort.live</u>&quot;&gt;</s> 020_too_short_1990_short_dogs_in_the_house_01_Short_Dogs_In_The_House.mp3&lt;/<b>a</b>&gt;&lt;<b>br</b>&gt;</div>
<div><b class="n">112 </b>&lt;<b>br</b>&gt;&lt;<b>a</b> <em>href</em>=&quot;<u>lightning:sir@tooshort.live</u>&quot;&gt; 021_too_short_1990_short_dogs_in_the_house_02_Its_Your_Life.mp3&lt;/<b>a</b>&gt;&lt;<b>br</b>&gt;</div>
<div><b class="n">113 </b>&lt;<b>br</b>&gt;&lt;<b>a</b> <em>href</em>=&quot;<u>lightning:sir@tooshort.live</u>&quot;&gt; 022_too_short_1990_short_dogs_in_the_house_03_The_Ghetto.mp3&lt;/<b>a</b>&gt;&lt;<b>br</b>&gt;</div>
<div><b class="n">114 </b>&lt;<b>br</b>&gt;&lt;<b>a</b> <em>href</em>=&quot;<u>lightning:sir@tooshort.live</u>&quot;&gt; 023_too_short_1990_short_dogs_in_the_house_04_Short_But_Funky.mp3&lt;/<b>a</b>&gt;&lt;<b>br</b>&gt;</div>
<div><b class="n">115 </b>&lt;<b>br</b>&gt;&lt;<b>a</b> <em>href</em>=&quot;<u>lightning:sir@tooshort.live</u>&quot;&gt; 024_too_short_1990_short_dogs_in_the_house_05_In_The_Oaktown.mp3&lt;/<b>a</b>&gt;&lt;<b>br</b>&gt;</div>
</div></div><div class="abs" style="left:0;top:1015px;width:1178px;height:16px;background:#6e6e6e"></div><div class="abs" style="left:0;top:1015px;width:21px;height:16px;background:#1c1b22"></div><svg class="abs" style="left:6.5px;top:1019.5px" width="8" height="13" viewBox="0 0 8 13"><path d="M6.800 1 2 6.500 6.800 12" fill="none" stroke="#737376" stroke-width="3"/></svg></div></body></html>
